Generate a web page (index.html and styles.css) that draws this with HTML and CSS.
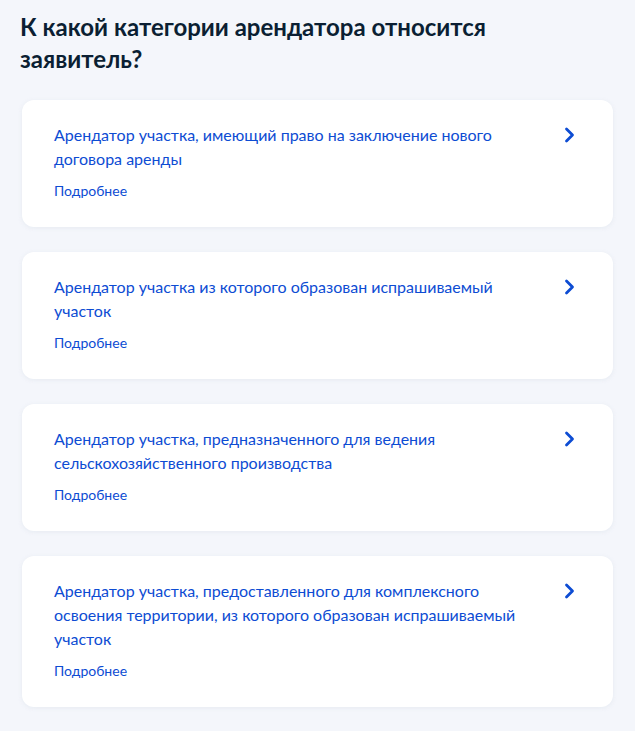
FILE: index.html
```html
<!DOCTYPE html>
<html lang="ru">
<head>
<meta charset="UTF-8" />
<meta name="viewport" content="width=device-width, initial-scale=1.0"/>
<title>Категория арендатора</title>
<link rel="stylesheet" href="styles.css">
</head>
<body>
<div class="page">
  <h1 class="title">К какой категории арендатора относится заявитель?</h1>

  <div class="options">
    <a class="option" href="#">
      <div class="option-body">
        <div class="option-text">Арендатор участка, имеющий право на заключение нового договора аренды</div>
        <div class="option-more">Подробнее</div>
      </div>
      <svg class="chevron" viewBox="0 0 24 24" width="24" height="24"><path d="M9.5 6l6 6-6 6" fill="none" stroke="#0d4cd3" stroke-width="2.8" stroke-linecap="round" stroke-linejoin="round"/></svg>
    </a>

    <a class="option" href="#">
      <div class="option-body">
        <div class="option-text">Арендатор участка из которого образован испрашиваемый участок</div>
        <div class="option-more">Подробнее</div>
      </div>
      <svg class="chevron" viewBox="0 0 24 24" width="24" height="24"><path d="M9.5 6l6 6-6 6" fill="none" stroke="#0d4cd3" stroke-width="2.8" stroke-linecap="round" stroke-linejoin="round"/></svg>
    </a>

    <a class="option" href="#">
      <div class="option-body">
        <div class="option-text">Арендатор участка, предназначенного для ведения сельскохозяйственного производства</div>
        <div class="option-more">Подробнее</div>
      </div>
      <svg class="chevron" viewBox="0 0 24 24" width="24" height="24"><path d="M9.5 6l6 6-6 6" fill="none" stroke="#0d4cd3" stroke-width="2.8" stroke-linecap="round" stroke-linejoin="round"/></svg>
    </a>

    <a class="option" href="#">
      <div class="option-body">
        <div class="option-text">Арендатор участка, предоставленного для комплексного освоения территории, из которого образован испрашиваемый участок</div>
        <div class="option-more">Подробнее</div>
      </div>
      <svg class="chevron" viewBox="0 0 24 24" width="24" height="24"><path d="M9.5 6l6 6-6 6" fill="none" stroke="#0d4cd3" stroke-width="2.8" stroke-linecap="round" stroke-linejoin="round"/></svg>
    </a>
  </div>
</div>
</body>
</html>
```

FILE: styles.css
```css
html, body {
  margin: 0;
  padding: 0;
  background: #f4f6fb;
  font-family: Lato, "Liberation Sans", sans-serif;
}

.page {
  padding: 11px 22px 24px 22px;
}

.title {
  margin: 0 0 25px -2px;
  font-size: 24px;
  line-height: 32px;
  font-weight: 700;
  color: #0b1f33;
}

.options {
  display: flex;
  flex-direction: column;
  gap: 25px;
}

.option {
  display: flex;
  align-items: flex-start;
  gap: 32px;
  padding: 23px 32px 26px 32px;
  background: #fff;
  border-radius: 12px;
  box-shadow: 0 1px 4px rgba(228, 233, 241, 0.9);
  text-decoration: none;
}

.option-body {
  flex: 1;
}

.option-text {
  font-size: 16px;
  line-height: 24px;
  color: #0d4cd3;
}

.option-more {
  margin-top: 10px;
  font-size: 14px;
  line-height: 20px;
  color: #0d4cd3;
}

.chevron {
  flex: none;
}
```
